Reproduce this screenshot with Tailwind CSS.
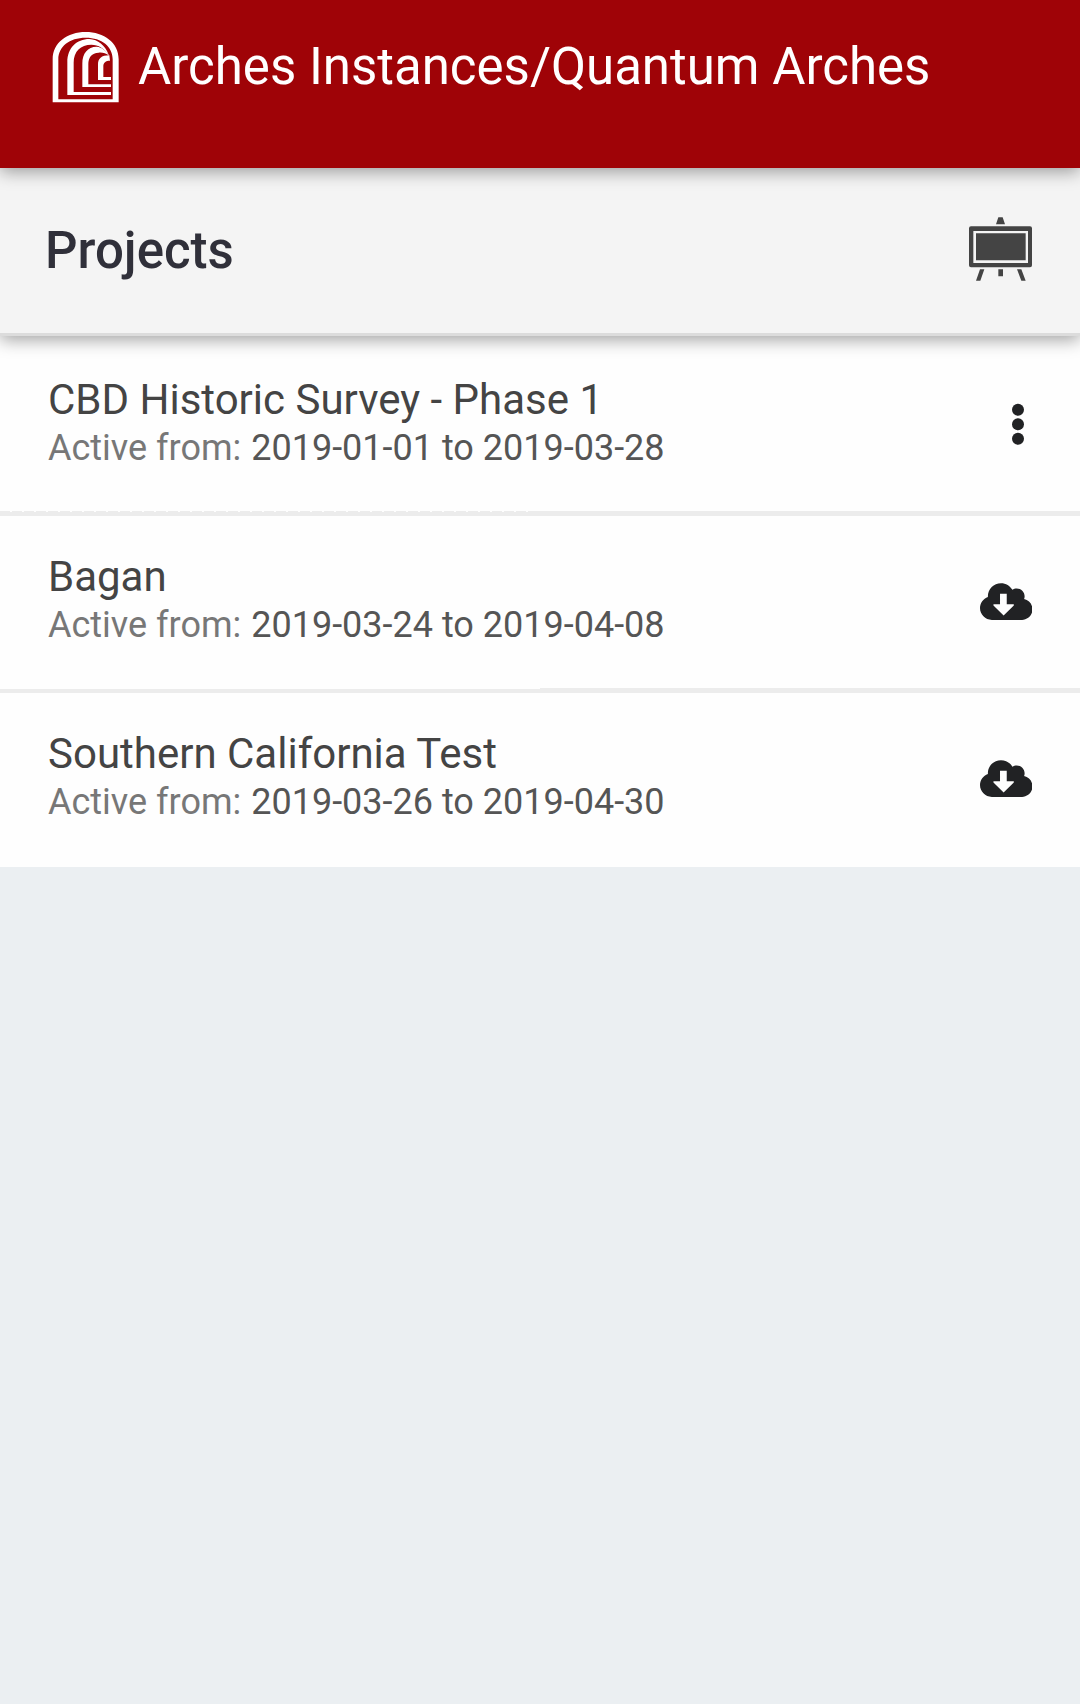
<!DOCTYPE html>
<html lang="en">
<head>
<meta charset="utf-8">
<title>Arches Projects</title>
<script src="https://cdn.jsdelivr.net/npm/@tailwindcss/browser@4"></script>
</head>
<body class="flex min-h-screen flex-col bg-[#ebeff2] font-['Roboto',sans-serif]">
<header class="z-20 flex h-[168px] items-start bg-[#9f0307] pl-[52px] pt-8 shadow-[0_4px_16px_rgba(0,0,0,0.36)]">
  <svg class="h-[71px] w-[67px] shrink-0" viewBox="36 36 201 213" fill="#fff">
    <path fill-rule="evenodd" d="M38 247V118C38 68 82 36 137 36S236 68 236 118V247ZM55 238H218V118C218 80 186 53 137 53S55 80 55 118Z"/>
    <path d="M82 225V126C82 84 110 57 148 57C174 58 195 76 206 104C192 86 176 74 154 74C122 74 101 94 101 128V216H213V225Z"/>
    <path d="M127 201V131C127 100 143 80 170 80C186 82 199 92 208 107C197 99 187 97 176 98C155 99 145 112 145 133V193H213V201Z"/>
    <path d="M174 180V134C174 116 184 106 208 106L210 122C197 122 190 128 190 139V171H213V180Z"/>
  </svg>
  <h1 class="ml-[19px] mt-[5px] whitespace-nowrap text-[51px] leading-[60px] text-white">Arches Instances/Quantum Arches</h1>
</header>
<section class="z-10 flex h-[168px] items-center justify-between border-b-3 border-[#dcdcdc] bg-[#f4f4f4] pl-[45px] pr-12 shadow-[0_4px_16px_rgba(0,0,0,0.36)]">
  <h2 class="text-[51px] font-medium leading-[60px] text-[#30303a]">Projects</h2>
  <svg class="mb-[3px] h-16 w-[63px]" viewBox="57 50 189 192" fill="#444">
    <path d="M145 51H158L165 72H138ZM90 207H103L91 241H78ZM145 207H159V228H145ZM201 207H214L227 241H214Z"/>
    <path fill-rule="evenodd" d="M63 78H240Q246 78 246 84V195Q246 201 240 201H63Q57 201 57 195V84Q57 78 63 78ZM70 92V188H234V92Z"/>
    <path d="M78 99H227V180H78Z"/>
  </svg>
</section>
<main class="bg-[#fefefe] text-[#444]">
  <article class="flex h-[175px] items-start justify-between pl-12 pr-12">
    <div class="pt-[39px]">
      <h3 class="text-[42px] leading-[50px]">CBD Historic Survey - Phase 1</h3>
      <p class="text-[36px] leading-[46px] text-[#555]"><span class="mr-px text-[#777]">Active from:</span> 2019-01-01 to 2019-03-28</p>
    </div>
    <svg class="mr-2 mt-[67px] h-[42px] w-3" viewBox="0 0 12 42" fill="#212224"><circle cx="6" cy="6.7" r="6"/><circle cx="6" cy="21.3" r="6"/><circle cx="6" cy="35.8" r="6"/></svg>
  </article>
  <div class="h-[5px] bg-[#ececec]"><div class="h-px w-[530px] bg-[repeating-linear-gradient(90deg,#ececec_0_10px,#fefefe_10px_12px)]"></div></div>
  <article class="flex h-[172px] items-start justify-between pl-12 pr-12">
    <div class="pt-[36px]">
      <h3 class="text-[42px] leading-[50px]">Bagan</h3>
      <p class="text-[36px] leading-[46px] text-[#555]"><span class="mr-px text-[#777]">Active from:</span> 2019-03-24 to 2019-04-08</p>
    </div>
    <svg class="mt-[67px] h-[37px] w-[52.500px]" viewBox="0 32 640 448" fill="#212224"><path d="M537.6 226.6c4.1-10.7 6.4-22.4 6.4-34.6 0-53-43-96-96-96-19.7 0-38.1 6-53.3 16.2C367 64.2 315.3 32 256 32c-88.4 0-160 71.6-160 160 0 2.700.1 5.400.2 8.100C40.200 219.800 0 273.200 0 336c0 79.500 64.500 144 144 144h368c70.700 0 128-57.300 128-128 0-61.900-44-113.600-102.400-125.400zM412 304L288 428 164 304V288H244V160H326V288H412Z"/></svg>
  </article>
  <div class="flex h-[5px] items-end"><div class="h-1 w-1/2 bg-[#ececec]"></div><div class="h-[5px] w-1/2 bg-[#ececec]"></div></div>
  <article class="flex h-[174px] items-start justify-between pl-12 pr-12">
    <div class="pt-[36px]">
      <h3 class="text-[42px] leading-[50px]">Southern California Test</h3>
      <p class="text-[36px] leading-[46px] text-[#555]"><span class="mr-px text-[#777]">Active from:</span> 2019-03-26 to 2019-04-30</p>
    </div>
    <svg class="mt-[67px] h-[37px] w-[52.500px]" viewBox="0 32 640 448" fill="#212224"><path d="M537.6 226.6c4.1-10.7 6.4-22.4 6.4-34.6 0-53-43-96-96-96-19.7 0-38.1 6-53.3 16.2C367 64.2 315.3 32 256 32c-88.4 0-160 71.6-160 160 0 2.700.1 5.400.2 8.100C40.200 219.800 0 273.200 0 336c0 79.500 64.500 144 144 144h368c70.700 0 128-57.300 128-128 0-61.900-44-113.600-102.400-125.400zM412 304L288 428 164 304V288H244V160H326V288H412Z"/></svg>
  </article>
</main>
</body>
</html>
